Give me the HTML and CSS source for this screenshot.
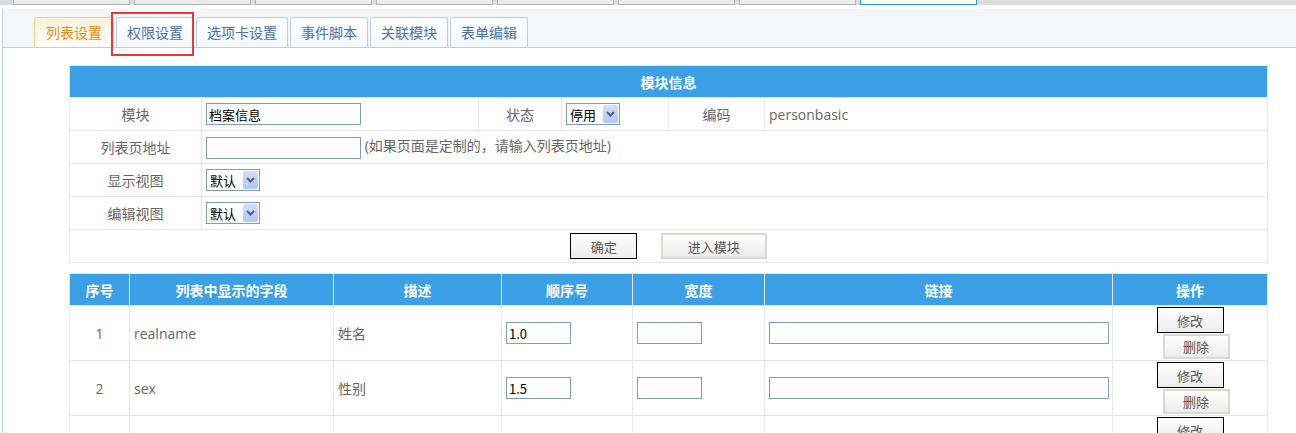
FILE: index.html
```html
<!DOCTYPE html>
<html lang="zh-CN">
<head>
    <meta charset="UTF-8">
    <title>列表设置</title>
    <link rel="stylesheet" href="styles.css">
</head>
<body>
    <div class="topbar">
        <span class="topbtn"></span>
        <span class="topbtn"></span>
        <span class="topbtn"></span>
        <span class="topbtn"></span>
        <span class="topbtn"></span>
        <span class="topbtn"></span>
        <span class="topbtn"></span>
        <span class="topbtn active"></span>
    </div>

    <div class="frame">
        <div class="tabbar">
            <a class="tab current">列表设置</a>
            <a class="tab">权限设置</a>
            <a class="tab">选项卡设置</a>
            <a class="tab">事件脚本</a>
            <a class="tab">关联模块</a>
            <a class="tab">表单编辑</a>
        </div>

        <div class="content">
            <table class="info">
                <colgroup>
                    <col style="width:132px"><col style="width:277px"><col style="width:83px">
                    <col style="width:107px"><col style="width:96px"><col>
                </colgroup>
                <tr><th colspan="6">模块信息</th></tr>
                <tr>
                    <td class="label">模块</td>
                    <td><input class="text" type="text" value="档案信息"></td>
                    <td class="label">状态</td>
                    <td>
                        <span class="dropdown">
                            <select><option>停用</option><option>启用</option></select>
                            <span class="arrow"><svg width="9" height="6" viewBox="0 0 9 6"><path d="M1 1 L4.5 4.5 L8 1" fill="none" stroke="#4d6185" stroke-width="2"/></svg></span>
                        </span>
                    </td>
                    <td class="label">编码</td>
                    <td class="value">personbasic</td>
                </tr>
                <tr>
                    <td class="label">列表页地址</td>
                    <td colspan="5"><input class="text" type="text"> <span class="hint">(如果页面是定制的，请输入列表页地址)</span></td>
                </tr>
                <tr>
                    <td class="label">显示视图</td>
                    <td colspan="5">
                        <span class="dropdown">
                            <select><option>默认</option></select>
                            <span class="arrow"><svg width="9" height="6" viewBox="0 0 9 6"><path d="M1 1 L4.5 4.5 L8 1" fill="none" stroke="#4d6185" stroke-width="2"/></svg></span>
                        </span>
                    </td>
                </tr>
                <tr>
                    <td class="label">编辑视图</td>
                    <td colspan="5">
                        <span class="dropdown">
                            <select><option>默认</option></select>
                            <span class="arrow"><svg width="9" height="6" viewBox="0 0 9 6"><path d="M1 1 L4.5 4.5 L8 1" fill="none" stroke="#4d6185" stroke-width="2"/></svg></span>
                        </span>
                    </td>
                </tr>
                <tr>
                    <td colspan="6" class="actions">
                        <button class="btn btn-default">确定</button>
                        <button class="btn btn-wide">进入模块</button>
                    </td>
                </tr>
            </table>

            <table class="grid">
                <colgroup>
                    <col style="width:60px"><col style="width:204px"><col style="width:168px">
                    <col style="width:131px"><col style="width:132px"><col style="width:348px"><col>
                </colgroup>
                <tr>
                    <th>序号</th>
                    <th>列表中显示的字段</th>
                    <th>描述</th>
                    <th>顺序号</th>
                    <th>宽度</th>
                    <th>链接</th>
                    <th>操作</th>
                </tr>
                <tr>
                    <td class="num">1</td>
                    <td>realname</td>
                    <td>姓名</td>
                    <td><input class="text short" type="text" value="1.0"></td>
                    <td><input class="text short" type="text"></td>
                    <td><input class="text long" type="text"></td>
                    <td class="ops">
                        <button class="btn btn-default">修改</button>
                        <button class="btn btn-del">删除</button>
                    </td>
                </tr>
                <tr>
                    <td class="num">2</td>
                    <td>sex</td>
                    <td>性别</td>
                    <td><input class="text short" type="text" value="1.5"></td>
                    <td><input class="text short" type="text"></td>
                    <td><input class="text long" type="text"></td>
                    <td class="ops">
                        <button class="btn btn-default">修改</button>
                        <button class="btn btn-del">删除</button>
                    </td>
                </tr>
                <tr>
                    <td class="num"></td>
                    <td></td>
                    <td></td>
                    <td></td>
                    <td></td>
                    <td></td>
                    <td class="ops">
                        <button class="btn btn-default">修改</button>
                        <button class="btn btn-del">删除</button>
                    </td>
                </tr>
            </table>
        </div>
    </div>

    <div class="mark"></div>
</body>
</html>
```

FILE: styles.css
```css
body {
    margin: 0;
    background: #fff;
    font-family: "Open Sans", "Noto Sans CJK SC", sans-serif;
    font-size: 14px;
    color: #666;
    overflow: hidden;
}

/* strip of buttons from the parent window */
.topbar {
    height: 5px;
    background: #dcdcdc;
    display: flex;
    gap: 4px;
    padding-left: 13px;
    margin-bottom: 4px;
}

.topbtn {
    width: 115px;
    height: 4px;
    border: 1px solid #b3b3b3;
    border-top: none;
    background: #ececec;
}

.topbtn.active {
    border-color: #2b9be6;
    background: #fff;
}

.frame {
    margin-left: 2px;
    border-left: 1px solid #b8d0e8;
    height: 424px;
}

.tabbar {
    height: 38px;
    background: #f3f7fc;
    border-bottom: 1px solid #b8d0e8;
    display: flex;
    align-items: flex-end;
    gap: 2px;
    padding-left: 31px;
}

.tab {
    height: 29px;
    line-height: 29px;
    padding: 0 10px;
    border: 1px solid #b8d0e8;
    border-bottom: none;
    border-radius: 3px 3px 0 0;
    background: linear-gradient(#ffffff, #f4f8fc);
    color: #4a72ac;
    font-size: 14px;
    cursor: pointer;
}

.tab.current {
    padding: 0 11px;
    border-color: #f2d08c;
    background: linear-gradient(#fdf3dc, #fffdf8);
    color: #ee8a1a;
}

.content {
    padding: 17px 0 0 66px;
}

table {
    width: 1199px;
    border-collapse: collapse;
    table-layout: fixed;
}

th, td {
    border: 1px solid #e6e6e6;
    padding: 0 4px;
    vertical-align: middle;
}

th {
    background: #3ca0e6;
    color: #fff;
    font-weight: bold;
    font-size: 14px;
    height: 31px;
    text-align: center;
}

.info td {
    height: 32px;
}

.info td.label {
    text-align: center;
}

.info td.value {
    font-size: 14px;
}

.hint {
    color: #666;
}

.text {
    box-sizing: border-box;
    width: 155px;
    height: 22px;
    border: 1px solid #7f9db9;
    padding: 0 2px;
    font-family: "Noto Sans CJK SC", sans-serif;
    font-size: 13px;
    color: #000;
    vertical-align: middle;
}

.text.short {
    width: 65px;
}

.text.long {
    width: 340px;
}

.dropdown {
    box-sizing: border-box;
    display: inline-flex;
    align-items: stretch;
    height: 22px;
    border: 1px solid #7f9db9;
    background: #fff;
    vertical-align: middle;
    padding: 1px;
}

.dropdown select {
    appearance: none;
    -webkit-appearance: none;
    border: none;
    background: transparent;
    padding: 0 0 0 2px;
    width: 35px;
    font-family: "Noto Sans CJK SC", sans-serif;
    font-size: 13px;
    color: #000;
    outline: none;
}

.arrow {
    width: 15px;
    display: flex;
    align-items: center;
    justify-content: center;
    background: linear-gradient(#d2defd, #b1c6f7);
    border-radius: 2px;
}

.actions {
    text-align: center;
}

.btn {
    box-sizing: border-box;
    height: 26px;
    padding: 0;
    background: linear-gradient(#ffffff, #ececec);
    font-family: "Noto Sans CJK SC", sans-serif;
    font-size: 13px;
    color: #555;
    cursor: pointer;
    vertical-align: middle;
}

.btn-default {
    width: 67px;
    border: 1px solid #000;
}

.btn-wide {
    width: 106px;
    border: 2px solid #dcdad0;
    margin-left: 20px;
}

.btn-del {
    width: 67px;
    height: 25px;
    border: 2px solid #dcdad0;
}

.grid {
    margin-top: 10px;
}

.grid td {
    height: 54px;
}

.grid td.num {
    text-align: center;
}

.grid td.ops {
    padding: 0;
    vertical-align: top;
}

.ops .btn {
    display: block;
    margin: 1px auto 0;
}

.ops .btn-del {
    position: relative;
    left: 6px;
}

/* annotation box drawn over the second tab */
.mark {
    position: absolute;
    left: 111px;
    top: 12px;
    width: 79px;
    height: 40px;
    border: 2px solid #e5383b;
}
```
